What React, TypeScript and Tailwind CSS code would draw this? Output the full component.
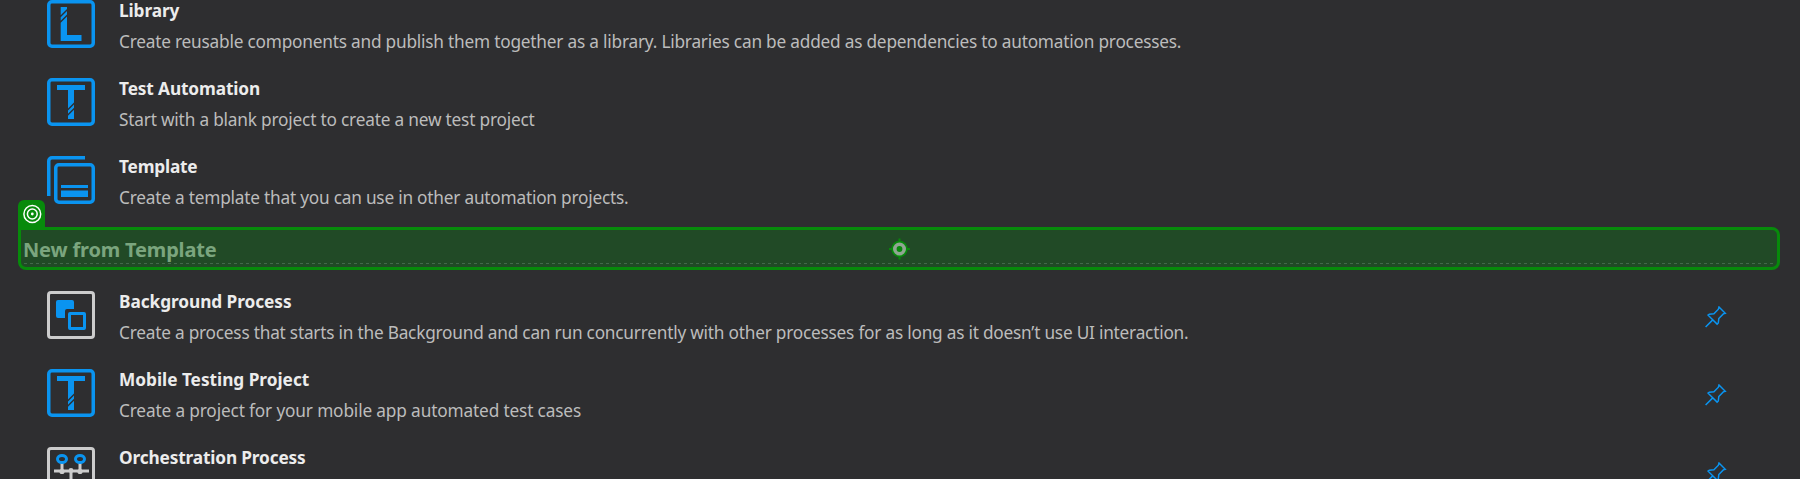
import React from "react";

const BLUE = "#0a94f0";
const GREY = "#cccccc";
const GREEN = "#078a0b";

function LibraryIcon() {
  return (
    <svg width="48" height="48" viewBox="0 0 48 48" fill="none">
      <rect x="1.75" y="1.75" width="44.5" height="44.5" rx="3.2" stroke={BLUE} strokeWidth="3.5" />
      <path d="M13.700 7H20v2l-6.300 6.300zM20 11v3.500l-6.300 6.300v-3.500zM20 16.500V35h14.500v6H13.700V22.800z" fill={BLUE} />
    </svg>
  );
}

function TestIcon() {
  return (
    <svg width="48" height="48" viewBox="0 0 48 48" fill="none">
      <rect x="1.75" y="1.75" width="44.5" height="44.5" rx="3.2" stroke={BLUE} strokeWidth="3.5" />
      <path d="M10 7h28v5H27v12.500l-6 6V12H10zM27 26.500v3.200l-6 6v-3.200zM27 31.700V41h-6v-3.300z" fill={BLUE} />
    </svg>
  );
}

function TemplateIcon() {
  return (
    <svg width="48" height="48" viewBox="0 0 48 48" fill="none" stroke={BLUE} strokeWidth="3.5">
      <path d="M1.75 40V5a3.250 3.250 0 0 1 3.250-3.250H38" />
      <rect x="8.75" y="8.75" width="37.5" height="37.5" rx="3.2" />
      <path d="M14 29h27v3H14zM14 34.500h27V41H14z" fill={BLUE} stroke="none" />
    </svg>
  );
}

function BackgroundIcon() {
  return (
    <svg width="48" height="48" viewBox="0 0 48 48" fill="none">
      <rect x="1.5" y="1.5" width="45" height="45" rx="2.5" stroke={GREY} strokeWidth="3" />
      <path d="M11 9h14a2 2 0 0 1 2 2v7h-7a2 2 0 0 0-2 2v7h-7a2 2 0 0 1-2-2V11a2 2 0 0 1 2-2z" fill={BLUE} />
      <rect x="22.5" y="22.5" width="15" height="15" rx="0.5" stroke={BLUE} strokeWidth="3" />
    </svg>
  );
}

function OrchestrationIcon() {
  return (
    <svg width="48" height="48" viewBox="0 0 48 48" fill="none">
      <rect x="1.5" y="1.5" width="45" height="45" rx="2.5" stroke={GREY} strokeWidth="3" />
      <path d="M15 16v8M33 16v8M7 24h35M24 22v20" stroke={GREY} strokeWidth="3" />
      <circle cx="15" cy="24.500" r="2.600" fill={GREY} />
      <circle cx="33" cy="24.500" r="2.600" fill={GREY} />
      <circle cx="24" cy="23.500" r="2.400" fill={GREY} />
      <ellipse cx="15" cy="12" rx="4.500" ry="3.600" stroke={BLUE} strokeWidth="3" />
      <ellipse cx="33" cy="12" rx="4.500" ry="3.600" stroke={BLUE} strokeWidth="3" />
    </svg>
  );
}

function Pin() {
  return (
    <svg width="22" height="22" viewBox="0 0 22 22" fill="none" stroke={BLUE} strokeWidth="1.5">
      <path d="M14 1l6.300 6.300-2 .6-4.500 4.600-.5 4.500-1.200 1.100-9-8.900 1.200-.9 4.600-.5 4.500-4.600zM7.500 14.100L.6 21" />
    </svg>
  );
}

interface RowProps {
  icon: React.ReactNode;
  title: string;
  text?: string;
  titleClass?: string;
  textClass?: string;
  pinned?: boolean;
}

function Row({ icon, title, text, titleClass = "", textClass = "", pinned }: RowProps) {
  return (
    <div className="flex h-[78px] shrink-0 items-start pr-[73px] pl-[47px]">
      <div className="shrink-0">{icon}</div>
      <div className="ml-6 flex-1 text-[17.25px] leading-[22px] whitespace-nowrap">
        <div className="h-[31px] font-bold text-[#ececec]">
          <span className={titleClass}>{title}</span>
        </div>
        <div className="text-[#bcbcbc]">
          <span className={textClass}>{text}</span>
        </div>
      </div>
      {pinned && (
        <div className="mt-[15px] shrink-0">
          <Pin />
        </div>
      )}
    </div>
  );
}

function SelectedHeading() {
  return (
    <section className="relative mt-[-7px] mb-[21px] ml-[18px] flex h-[43px] w-[1762px] shrink-0 items-center rounded-[8px] rounded-tl-none border-3 border-[#078a0b] bg-[#214a26] pl-[2px]">
      <h2 className="pt-[2px] text-[20px] leading-[28px] font-bold tracking-[-0.17px] whitespace-nowrap text-[#7ba57e]">New from Template</h2>
      <div className="absolute top-[-30px] left-[-3px] flex h-[28px] w-[27px] justify-center rounded-t-[6px] bg-[#078a0b] pt-[4px]">
        <svg width="20" height="20" viewBox="0 0 20 20" fill="none" stroke="#ffffff" strokeWidth="1.5">
          <circle cx="10.300" cy="10" r="8.400" />
          <circle cx="10.300" cy="10" r="4.900" />
          <circle cx="10.300" cy="10" r="1.400" fill="#ffffff" stroke="none" />
        </svg>
      </div>
      <div className="absolute top-[33px] right-[3px] left-[3px] h-px bg-[repeating-linear-gradient(90deg,#42694a_0px,#42694a_3px,transparent_3px,transparent_6px)]" />
      <svg className="absolute top-[8px] left-[867px]" width="23" height="22" viewBox="0 0 23 22">
        <path d="M11.500 .6v20.800M1.100 11h20.800" stroke={GREEN} strokeWidth="2" />
        <circle cx="11.500" cy="11" r="8.200" fill={GREEN} />
        <circle cx="11.500" cy="11" r="4.700" fill="none" stroke="#90a592" strokeWidth="3.6" />
      </svg>
    </section>
  );
}

export default function App() {
  return (
    <main className="flex h-[479px] w-[1800px] flex-col overflow-hidden bg-[#2e2e30] font-['Noto_Sans',sans-serif]">
      <Row
        icon={<LibraryIcon />}
        title="Library"
        titleClass="tracking-[-0.1px]"
        text="Create reusable components and publish them together as a library. Libraries can be added as dependencies to automation processes."
        textClass="tracking-[-0.215px]"
      />
      <Row
        icon={<TestIcon />}
        title="Test Automation"
        titleClass="tracking-[-0.12px]"
        text="Start with a blank project to create a new test project"
        textClass="tracking-[-0.2px]"
      />
      <Row
        icon={<TemplateIcon />}
        title="Template"
        titleClass="tracking-[-0.2px]"
        text="Create a template that you can use in other automation projects."
        textClass="tracking-[-0.22px]"
      />
      <SelectedHeading />
      <Row
        icon={<BackgroundIcon />}
        title="Background Process"
        titleClass="tracking-[-0.06px]"
        text="Create a process that starts in the Background and can run concurrently with other processes for as long as it doesn’t use UI interaction."
        textClass="tracking-[-0.225px]"
        pinned
      />
      <Row
        icon={<TestIcon />}
        title="Mobile Testing Project"
        titleClass="tracking-[-0.02px]"
        text="Create a project for your mobile app automated test cases"
        textClass="tracking-[-0.155px]"
        pinned
      />
      <Row icon={<OrchestrationIcon />} title="Orchestration Process" titleClass="tracking-[-0.15px]" pinned />
    </main>
  );
}
